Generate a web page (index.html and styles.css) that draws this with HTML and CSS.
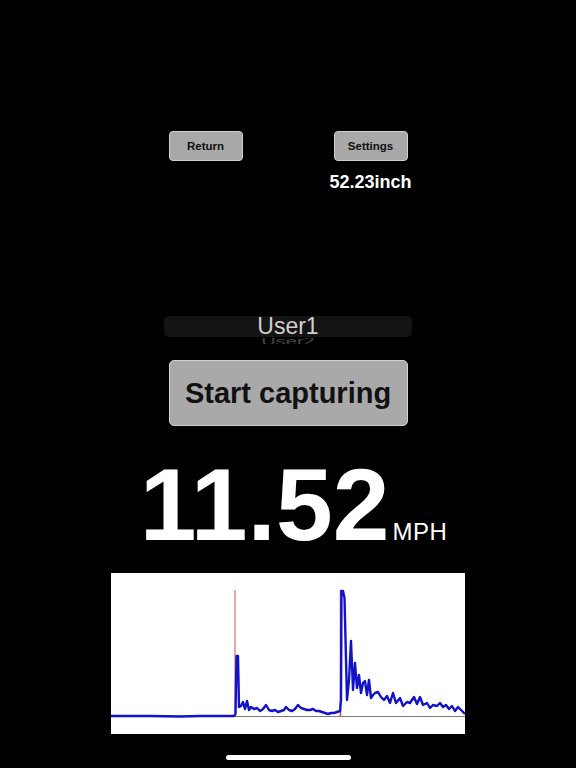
FILE: index.html
```html
<!DOCTYPE html>
<html lang="en">
<head>
<meta charset="utf-8">
<title>Capture</title>
<link rel="stylesheet" href="styles.css">
</head>
<body>
<div class="screen">
  <div class="top-row">
    <button class="small-btn">Return</button>
    <button class="small-btn">Settings</button>
  </div>
  <div class="info-row">
    <span class="spacer"></span>
    <span class="inch">52.23inch</span>
  </div>
  <div class="picker">
    <div class="picker-row">User1</div>
  </div>
  <div class="picker-next"><div class="picker-next-text">User2</div></div>
  <button class="big-btn">Start capturing</button>
  <div class="speed-row">
    <span class="speed">11.52</span><span class="unit">MPH</span>
  </div>
  <div class="chart">
    <svg class="chart-svg" viewBox="111 573 354 161" width="354" height="161" xmlns="http://www.w3.org/2000/svg">
      <rect x="111" y="573" width="354" height="161" fill="#ffffff"/>
      <line x1="111" y1="716.5" x2="465" y2="716.5" stroke="#7a7a7a" stroke-width="1"/>
      <line x1="235" y1="590" x2="235" y2="716" stroke="#d05050" stroke-width="1"/>
      <line x1="340.5" y1="590" x2="340.5" y2="716" stroke="#c04060" stroke-width="1.5"/>
      <polyline fill="none" stroke="#1212c8" stroke-width="2.4" stroke-linejoin="round"
        points="111,716 150,716 180,716.5 200,716 234,716 235.5,714 236.5,656 238,656 239,707 241,706 243,702 245,709 247,701 249,710 251,707 254,709 257,708 260,711 263,709 266,705 269,710 272,711 275,710 278,712 281,711 284,710 286,707 289,710 292,711 295,709 298,705 301,708 304,709 307,710 310,710 313,709 316,711 319,711 322,712 325,713 328,714 331,713 334,713 337,712 340,711 341,700 341.5,591 343,591 344.5,598 347,700 349,680 351,641 353,690 355,663 357,688 359,675 361,693 363,683 365,681 367,695 369,680 371,698 373,695 375,693 378,692 381,697 384,700 387,696 390,703 393,693 396,703 400,698 403,706 407,702 410,703 414,697 417,704 420,697 423,705 427,703 430,708 433,705 437,706 440,703 443,707 446,705 449,709 452,706 455,711 458,707 461,710 465,714"/>
    </svg>
  </div>
  <div class="home-indicator"></div>
</div>
</body>
</html>
```

FILE: styles.css
```css
html, body {
  margin: 0;
  padding: 0;
  background: #000000;
}

body {
  font-family: "Liberation Sans", Arial, sans-serif;
  color: #ffffff;
}

.screen {
  width: 576px;
  height: 768px;
  display: flex;
  flex-direction: column;
  align-items: center;
  padding-top: 131px;
  box-sizing: border-box;
  overflow: hidden;
}

.top-row,
.info-row {
  width: 239px;
  display: flex;
  justify-content: space-between;
}

.small-btn {
  width: 74px;
  height: 30px;
  padding: 0;
  background: #a8a8a8;
  border: 1px solid #cfcfcf;
  border-radius: 4px;
  font-family: "Liberation Sans", Arial, sans-serif;
  font-weight: bold;
  font-size: 11.5px;
  color: #111111;
}

.info-row {
  margin-top: 12px;
}

.spacer {
  width: 74px;
}

.inch {
  width: 74px;
  display: flex;
  justify-content: center;
  white-space: nowrap;
  font-weight: bold;
  font-size: 18px;
  line-height: 18px;
  color: #ffffff;
}

.picker {
  margin-top: 125px;
  width: 248px;
  height: 21px;
  background: #141414;
  border-radius: 5px;
  display: flex;
  justify-content: center;
}

.picker-row {
  font-size: 23px;
  line-height: 21px;
  color: #cfcfcf;
}

.picker-next {
  margin-top: 1px;
  width: 248px;
  height: 6px;
  overflow: hidden;
  display: flex;
  justify-content: center;
}

.picker-next-text {
  font-size: 20px;
  line-height: 14px;
  color: #444444;
  transform: scaleY(0.5);
  transform-origin: top;
}

.big-btn {
  margin-top: 16px;
  width: 239px;
  height: 66px;
  padding: 0;
  background: #a9a9a9;
  border: 1px solid #d2d2d2;
  border-radius: 5px;
  font-family: "Liberation Sans", Arial, sans-serif;
  font-weight: bold;
  font-size: 29px;
  color: #111111;
}

.speed-row {
  margin-top: 28px;
  height: 102px;
  display: flex;
  align-items: baseline;
  padding-left: 11px;
}

.speed {
  font-weight: bold;
  font-size: 102px;
  line-height: 102px;
  color: #ffffff;
}

.unit {
  font-size: 24px;
  letter-spacing: 0.5px;
  line-height: 24px;
  margin-left: 3px;
  color: #ffffff;
}

.chart {
  margin-top: 17px;
  width: 354px;
  height: 161px;
}

.chart-svg {
  display: block;
}

.home-indicator {
  margin-top: 21px;
  width: 125px;
  height: 5px;
  border-radius: 3px;
  background: #ffffff;
}
```
